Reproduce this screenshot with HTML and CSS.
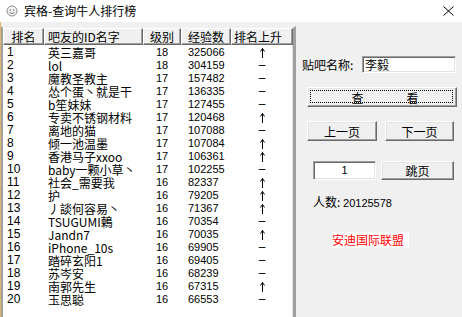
FILE: index.html
```html
<html lang="zh">
<head>
    <meta charset="UTF-8">
    <title>宾格-查询牛人排行榜</title>
    <link rel="stylesheet" href="styles.css">
</head>
<body>
    <div class="titlebar">
        <svg class="app-icon" viewBox="0 0 12 12">
            <circle cx="6" cy="6" r="5" fill="#f4f4f4" stroke="#8a8a8a" stroke-width="1"/>
            <circle cx="4.2" cy="5" r="0.8" fill="#7a7a7a"/>
            <circle cx="7.8" cy="5" r="0.8" fill="#7a7a7a"/>
            <path d="M3.5 7.5 Q6 9.5 8.5 7.5" fill="none" stroke="#7a7a7a" stroke-width="1"/>
        </svg>
        <span class="title">宾格-查询牛人排行榜</span>
        <svg class="close" viewBox="0 0 11 10">
            <path d="M0.5 0.5 L10.5 9.5 M10.5 0.5 L0.5 9.5" stroke="#000" stroke-width="1" fill="none"/>
        </svg>
    </div>

    <div class="client">
        <div class="list">
            <div class="list-head">
                <div class="th th-rank">排名</div>
                <div class="th th-name">吧友的ID名字</div>
                <div class="th th-level">级别</div>
                <div class="th th-exp">经验数</div>
                <div class="th th-up">排名上升</div>
            </div>
            <div class="list-body" id="list-body">
                <!-- rows are added by the script below -->
            </div>
        </div>

        <div class="panel">
            <div class="field-row">
                <span class="label">贴吧名称:</span>
                <div class="edit edit-name">李毅</div>
            </div>
            <button class="btn btn-search"><span>查</span><span>看</span></button>
            <div class="pager">
                <button class="btn btn-prev">上一页</button>
                <button class="btn btn-next">下一页</button>
            </div>
            <div class="jump">
                <div class="edit edit-page">1</div>
                <button class="btn btn-jump">跳页</button>
            </div>
            <div class="count">人数: <span class="num">20125578</span></div>
            <div class="brand">安迪国际联盟</div>
        </div>
    </div>

    <script>
        // name, level, exp, went up?
        const users = [
            ["英三嘉哥", 18, 325066, true],
            ["lol", 18, 304159, false],
            ["魔教圣教主", 17, 157482, false],
            ["怂个蛋丶就是干", 17, 136335, false],
            ["b笙妹妹", 17, 127455, false],
            ["专卖不锈钢材料", 17, 120468, true],
            ["离地的猫", 17, 107088, false],
            ["倾一池温墨", 17, 107084, true],
            ["香港马子xxoo", 17, 106361, true],
            ["baby一颗小草丶", 17, 102255, false],
            ["社会_需要我", 16, 82337, true],
            ["护", 16, 79205, true],
            ["丿談何容易丶", 16, 71367, true],
            ["TSUGUMI鶫", 16, 70354, false],
            ["Jandn7", 16, 70035, true],
            ["iPhone_10s", 16, 69905, false],
            ["踏碎玄阳1", 16, 69405, false],
            ["苏岑安", 16, 68239, false],
            ["南郭先生", 16, 67315, true],
            ["玉思聪", 16, 66553, false]
        ];

        const arrowIcon = `<svg class="arrow" viewBox="0 0 5 11"><path d="M2.5 1 V11 M0.5 4.5 L2.5 1.5 L4.5 4.5" stroke="#000" stroke-width="1" fill="none"/></svg>`;

        const listBody = document.getElementById("list-body");

        users.forEach((user, index) => {
            const row = document.createElement("div");
            row.classList.add("row");
            row.innerHTML = `
                <div class="td td-rank">${index + 1}</div>
                <div class="td td-name">${user[0]}</div>
                <div class="td td-level">${user[1]}</div>
                <div class="td td-exp">${user[2]}</div>
                <div class="td td-up">${user[3] ? arrowIcon : "–"}</div>
            `;
            listBody.appendChild(row);
        });
    </script>
</body>
</html>
```

FILE: styles.css
```css
* {
    margin: 0;
    padding: 0;
    box-sizing: border-box;
}

body {
    width: 462px;
    height: 317px;
    overflow: hidden;
    background-color: #f0f0f0;
    font-family: "Liberation Sans", "Noto Sans CJK SC", sans-serif;
    font-size: 12px;
    color: #000;
}

.titlebar {
    height: 22px;
    background-color: #fff;
    display: flex;
    align-items: center;
    padding-left: 6px;
}

.app-icon {
    width: 12px;
    height: 12px;
}

.title {
    margin-left: 6px;
    font-family: "Noto Sans CJK SC", sans-serif;
    font-size: 12px;
    line-height: 22px;
}

.close {
    margin-left: auto;
    margin-right: 8px;
    width: 11px;
    height: 10px;
}

.client {
    display: flex;
    height: 295px;
    border-left: 1px solid #dcb66c;
}

/* list view */
.list {
    margin-top: 4px;
    width: 295px;
    height: 300px;
    background-color: #fff;
    border-top: 2px solid #f0f0f0;
    border-left: 2px solid #a0a0a0;
    border-right: 3px solid #a0a0a0;
    box-shadow: inset -1px 0 #e3e3e3;
    overflow: hidden;
}

.list-head {
    display: grid;
    grid-template-columns: 41px 99px 38px 50px 62px;
    height: 17px;
}

.th {
    background-color: #f0f0f0;
    border-top: 1px solid #fff;
    border-left: 1px solid #fff;
    border-right: 1px solid #696969;
    border-bottom: 1px solid #696969;
    box-shadow: inset -1px -1px #a0a0a0;
    font-family: "Noto Sans CJK SC", sans-serif;
    line-height: 15px;
    white-space: nowrap;
}

.th-rank, .th-level, .th-exp {
    text-align: center;
}

.th-name {
    padding-left: 3px;
}

.th-up {
    padding-left: 2px;
}

.list-body {
    padding-top: 1px;
}

.row {
    display: grid;
    grid-template-columns: 41px 99px 38px 50px 62px;
    height: 13px;
    line-height: 13px;
}

.td {
    white-space: nowrap;
}

.td-rank {
    padding-left: 4px;
}

.td-name {
    padding-left: 4px;
    font-family: "Noto Sans CJK SC", sans-serif;
}

.td-level {
    padding-left: 13px;
    font-size: 11px;
}

.td-exp {
    padding-left: 7px;
    font-size: 11px;
}

.td-up {
    display: flex;
    justify-content: center;
    align-items: center;
}

.td-up .arrow {
    width: 5px;
    height: 11px;
}

/* right panel */
.panel {
    display: flex;
    flex-direction: column;
    align-items: flex-start;
    flex: 1;
}

.field-row {
    display: flex;
    align-items: center;
    margin-top: 34px;
    padding-left: 6px;
}

.label {
    width: 60px;
    font-family: "Noto Sans CJK SC", sans-serif;
}

.edit {
    background-color: #fff;
    border-top: 1px solid #a0a0a0;
    border-left: 1px solid #a0a0a0;
    border-right: 1px solid #fff;
    border-bottom: 1px solid #fff;
    box-shadow: inset 1px 1px #696969, inset -1px -1px #e3e3e3;
    font-family: "Noto Sans CJK SC", sans-serif;
}

.edit-name {
    width: 94px;
    height: 17px;
    line-height: 15px;
    padding-left: 2px;
}

.btn {
    background-color: #f0f0f0;
    border-top: 1px solid #fff;
    border-left: 1px solid #fff;
    border-right: 1px solid #696969;
    border-bottom: 1px solid #696969;
    box-shadow: inset -1px -1px #a0a0a0, inset 1px 1px #e3e3e3;
    font-family: "Noto Sans CJK SC", sans-serif;
    font-size: 12px;
    color: #000;
    height: 20px;
}

.btn-search {
    position: relative;
    margin-top: 14px;
    margin-left: 11px;
    width: 150px;
    display: flex;
    justify-content: center;
    align-items: center;
    gap: 43px;
    padding-left: 6px;
}

/* focus rectangle of the default button */
.btn-search::after {
    content: "";
    position: absolute;
    top: 2px;
    left: 2px;
    right: 3px;
    bottom: 3px;
    border: 1px dotted #000;
}

.pager {
    display: flex;
    gap: 8px;
    margin-top: 14px;
    margin-left: 11px;
}

.btn-prev {
    width: 70px;
}

.btn-next {
    width: 69px;
}

.jump {
    display: flex;
    gap: 5px;
    margin-top: 20px;
    margin-left: 17px;
}

.edit-page {
    width: 63px;
    height: 19px;
    line-height: 17px;
    text-align: center;
    font-family: "Liberation Sans", sans-serif;
    font-size: 11px;
}

.btn-jump {
    width: 73px;
    height: 19px;
}

.count {
    margin-top: 15px;
    margin-left: 17px;
    line-height: 14px;
    font-family: "Noto Sans CJK SC", sans-serif;
}

.count .num {
    font-family: "Liberation Sans", sans-serif;
    font-size: 11px;
}

.brand {
    margin-top: 22px;
    margin-left: 36px;
    width: 77px;
    height: 16px;
    line-height: 16px;
    background-color: #fff;
    color: #f00;
    font-family: "Noto Sans CJK SC", sans-serif;
}
```
